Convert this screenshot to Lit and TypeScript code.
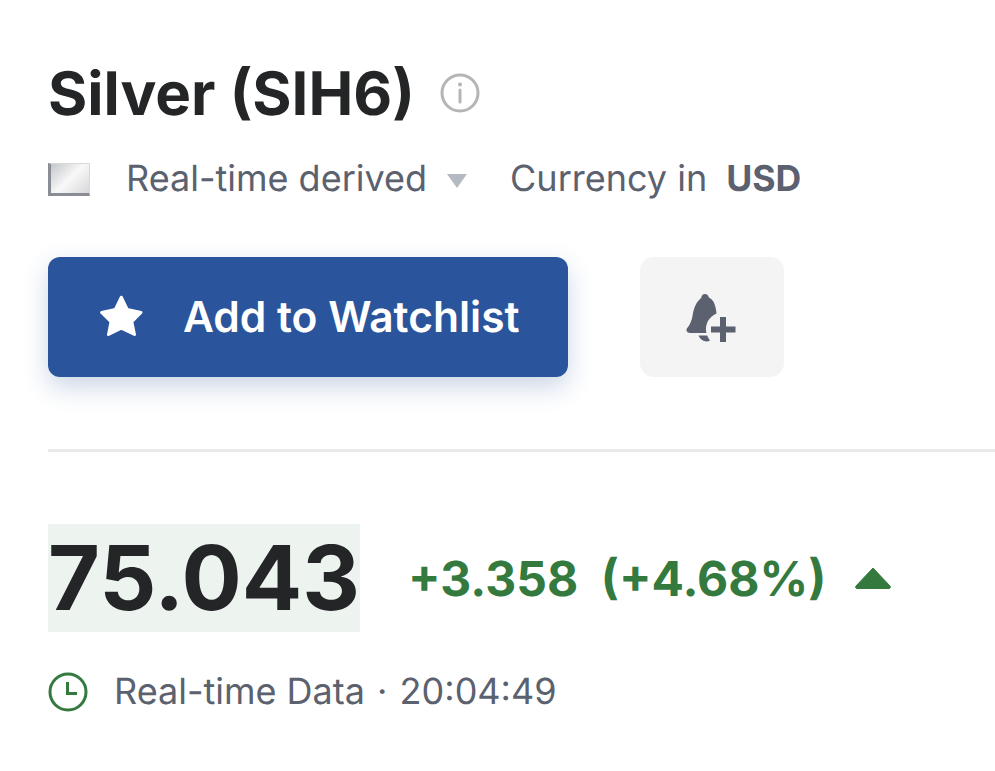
import { LitElement, html, css } from "lit";
import { customElement } from "lit/decorators.js";

@customElement("app-root")
export class AppRoot extends LitElement {
  static styles = css`
    :host { display: block; width: 995px; height: 771px; overflow: hidden; background: #fff; font-family: Inter, "Liberation Sans", sans-serif; color: #232526; text-rendering: geometricPrecision; }
    .page { padding: 56px 0 0 48px; }
    .title-row { display: flex; align-items: center; gap: 25px; height: 76px; }
    h1 { margin: 0; font-size: 60px; font-weight: 700; line-height: 76px; white-space: nowrap; }
    .info { width: 40px; height: 40px; display: block; margin-top: -3px; }
    .meta { display: flex; align-items: center; height: 44px; margin-top: 25px; font-size: 36px; color: #5b616e; white-space: nowrap; }
    .meta span, .time span.label { padding-bottom: 2px; }
    .flag { width: 42px; height: 33px; box-sizing: border-box; border-left: 3px solid #8a8d96; border-bottom: 3px solid #8a8d96; border-top: 1px solid #d8d8d8; border-right: 1px solid #d8d8d8; background: linear-gradient(135deg, #c4c6ca 0%, #f8f8f8 50%, #d6d7d9 100%); margin-right: 36px; }
    .caret { width: 22px; height: 16px; margin: 3px 42px 0 19px; display: block; }
    .usd { font-weight: 700; font-size: 35.6px; margin-left: 19px; }
    .actions { display: flex; gap: 72px; margin-top: 56px; }
    .watch { width: 520px; height: 120px; box-sizing: border-box; background: #2a559c; border-radius: 12px; border: 0; box-shadow: 0 10px 26px rgba(42, 85, 156, 0.24); color: #fff; display: flex; align-items: center; padding: 0 0 0 50px; gap: 39px; font: 600 42.5px Inter, sans-serif; text-rendering: geometricPrecision; }
    .star { width: 46px; height: 46px; display: block; }
    .bell { width: 144px; height: 120px; background: #f4f4f5; border-radius: 14px; display: flex; align-items: center; justify-content: center; }
    .bell svg { width: 54px; height: 54px; display: block; }
    .rule { height: 3px; background: #e8e9ea; margin-top: 72px; }
    .quote { display: flex; align-items: center; margin-top: 72px; }
    .price { background: #edf3ef; font-size: 89.4px; font-weight: 700; line-height: 108px; width: 312px; height: 108px; text-align: center; white-space: nowrap; }
    .change { color: #347a3e; font-size: 48px; font-weight: 700; margin-left: 48px; white-space: pre; }
    .up { width: 38px; height: 24px; display: block; margin-left: 28px; }
    .time { display: flex; align-items: center; margin-top: 38px; font-size: 36px; color: #5b616e; gap: 26px; height: 44px; }
    .clock { width: 40px; height: 40px; display: block; }
    .dot { margin: 0 2px; }
  `;

  render() {
    return html`
      <div class="page">
        <div class="title-row">
          <h1>Silver (SIH6)</h1>
          <svg class="info" viewBox="0 0 40 40" fill="none">
            <circle cx="20" cy="20" r="18" stroke="#b5b5b5" stroke-width="3"></circle>
            <circle cx="20" cy="11.5" r="2" fill="#b5b5b5"></circle>
            <path d="M20 17v12" stroke="#b5b5b5" stroke-width="3" stroke-linecap="round"></path>
          </svg>
        </div>
        <div class="meta">
          <div class="flag"></div>
          <span>Real-time derived</span>
          <svg class="caret" viewBox="0 0 22 16"><path d="M1 1h20L11 15z" fill="#b5bac2"></path></svg>
          <span>Currency in</span>
          <span class="usd">USD</span>
        </div>
        <div class="actions">
          <button class="watch">
            <svg class="star" viewBox="0 0 46 46"><path d="M23.300 3.200 29.200 15.400 43 18.500 33.800 27.800 36.500 40.500 23.300 34.200 10.500 40.500 13 27.800 3.600 18.500 17.400 15.400z" fill="#fff" stroke="#fff" stroke-width="3" stroke-linejoin="round"></path></svg>
            Add to Watchlist
          </button>
          <div class="bell">
            <svg viewBox="0 0 54 54" fill="#5b616e">
              <path d="M20 4c2 0 3.500 1.500 3.800 3.500 3.700 1.500 6.700 5.500 7.700 15.900A17 17 0 0 0 21.400 43H5c-3 0-4.500-3-2.800-5 2.500-2.500 4.500-7 5.500-13 1-7 3.800-13.500 8.500-17C16.500 5.500 18 4 20 4z"></path>
              <path d="M13.500 45.500H22.200A17 17 0 0 0 25 50.500C21 53 15.500 50.500 13.500 45.500z"></path>
              <path d="M35 27h6v9.500H50.500v6H41V52H35V42.500H26V36.500H35z"></path>
            </svg>
          </div>
        </div>
        <div class="rule"></div>
        <div class="quote">
          <div class="price">75.043</div>
          <div class="change">+3.358  (+4.68%)</div>
          <svg class="up" viewBox="0 0 38 24"><path d="M19 2 36 20c.8 1 .3 2.500-1 2.500H3c-1.300 0-1.800-1.500-1-2.500z" fill="#347a3e" stroke="#347a3e" stroke-linejoin="round"></path></svg>
        </div>
        <div class="time">
          <svg class="clock" viewBox="0 0 40 40" fill="none" stroke="#347a3e" stroke-width="3">
            <circle cx="20" cy="20" r="18"></circle>
            <path d="M19.500 10v11.500H29"></path>
          </svg>
          <span class="label">Real-time Data <span class="dot">·</span> 20:04:49</span>
        </div>
      </div>
    `;
  }
}
